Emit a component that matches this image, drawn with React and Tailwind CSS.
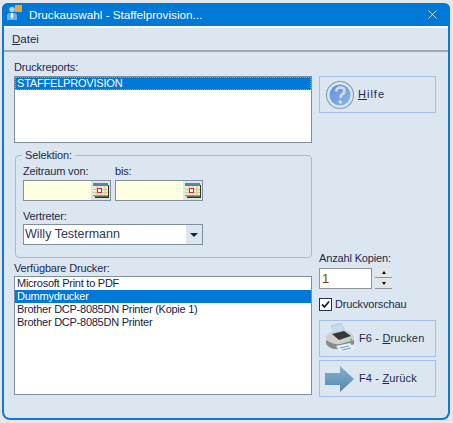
import React from 'react';
import { X } from 'lucide-react';

const AppIcon = () => (
    <svg width="16" height="16" viewBox="0 0 16 16" className="shrink-0">
        <rect x="8" y="0" width="7" height="7" fill="#f5a623" />
        <circle cx="5" cy="4.5" r="2.8" fill="#a9d3ef" />
        <path d="M0 15 V11 Q0 8 3 8 H7 Q10 8 10 11 V15 Z" fill="#6fb0de" />
        <path d="M4 8 H6 L6.3 12 L5 14 L3.7 12 Z" fill="#e8f3fb" />
    </svg>
);

const HelpIcon = () => (
    <svg width="30" height="30" viewBox="0 0 30 30" className="shrink-0">
        <defs>
            <linearGradient id="helpFill" x1="0" y1="0" x2="1" y2="1">
                <stop offset="0" stopColor="#5f8fdc" />
                <stop offset="1" stopColor="#8fb4e8" />
            </linearGradient>
        </defs>
        <circle cx="15" cy="15" r="14" fill="#8d9499" />
        <circle cx="15" cy="15" r="13" fill="#cdeaf8" />
        <circle cx="15" cy="15" r="10.5" fill="url(#helpFill)" />
        <path d="M11 11.5 Q11.5 7.5 15.5 7.5 Q19.5 7.5 19.5 11 Q19.5 13 17 14.5 Q15.5 15.5 15.5 18" fill="none" stroke="#d9dde2" strokeWidth="2.6" />
        <circle cx="15.3" cy="22" r="1.8" fill="#d9dde2" />
    </svg>
);

const CalendarIcon = () => (
    <svg width="16" height="15" viewBox="0 0 16 15" className="shrink-0">
        <rect x="2" y="2" width="14" height="13" fill="#333" />
        <rect x="0" y="0" width="15" height="3" fill="#4d8aa8" />
        <rect x="0" y="3" width="15" height="10" fill="#f0edc0" />
        <path d="M0 6.5 H15 M0 9.5 H15 M4 3 V13 M8 3 V13 M12 3 V13" stroke="#cfcd96" strokeWidth="1" />
        <rect x="4.5" y="5.5" width="4" height="4" fill="#f6f3d0" stroke="#d81b78" strokeWidth="1" />
        <rect x="0" y="12" width="15" height="1.5" fill="#a5a35a" />
    </svg>
);

const PrinterIcon = () => (
    <svg width="31" height="31" viewBox="0 0 31 31" className="shrink-0">
        <path d="M6 3 L16 0 L20 8 L10 11 Z" fill="#c4dcf2" stroke="#8fb2d4" strokeWidth="0.5" />
        <path d="M1 15 Q1 11 6 9 L20 7 Q28 9 29 14 L29 21 Q20 26 9 26 Q2 24 1 20 Z" fill="#cfd1ce" />
        <path d="M1 17 Q8 22 15 21 L29 17 L29 21 Q20 26 9 26 Q2 24 1 20 Z" fill="#8a8c8a" />
        <path d="M7 11 L19 8 L26 13 L14 17 Z" fill="#35373a" />
        <circle cx="26" cy="16.5" r="1" fill="#3bbf4a" />
        <path d="M11 23 L25 20 L30 26 L16 30 Z" fill="#e6eff9" />
        <path d="M15 25 L24 23 M17 27 L26 25" stroke="#6f9fd8" strokeWidth="1" />
    </svg>
);

const ArrowIcon = () => (
    <svg width="30" height="26" viewBox="0 0 30 26" className="shrink-0">
        <defs>
            <linearGradient id="arrowFill" x1="0" y1="0" x2="0" y2="1">
                <stop offset="0" stopColor="#86b0cf" />
                <stop offset="1" stopColor="#5388ad" />
            </linearGradient>
        </defs>
        <path d="M0 7 H15 V0 L29 13 L15 26 V19 H0 Z" fill="url(#arrowFill)" />
    </svg>
);

const ActionButton = ({ icon, children, gap }) => (
    <button className={`w-[117px] h-[37px] flex items-center pl-[5px] border border-[#a3c0e4] text-[11px] tracking-[0.15px] whitespace-nowrap text-[#1b2a4a] ${gap}`}>
        {icon}
        <span>{children}</span>
    </button>
);

const DateField = () => (
    <div className="w-[88px] h-[21px] flex border border-[#7f8f9c] bg-[#ffffe1]">
        <div className="flex-1" />
        <div className="w-[19px] bg-[#dce6f1] flex items-center justify-center">
            <CalendarIcon />
        </div>
    </div>
);

const printers = [
    'Microsoft Print to PDF',
    'Dummydrucker',
    'Brother DCP-8085DN Printer (Kopie 1)',
    'Brother DCP-8085DN Printer',
];

export default function App() {
    return (
        <div className="w-[453px] h-[423px] overflow-hidden bg-[#e4e6e8] pl-[2px] pr-[3px] pt-[3px] pb-[3px] font-['Liberation_Sans',sans-serif] text-[11px] tracking-[-0.15px] text-[#1b2a4a]">
            <div className="relative h-full flex flex-col rounded-t-[6px] rounded-b-[8px] border-x-2 border-b-2 border-[#0f78d4] bg-[#dce6f1]">
                <div className="h-[23px] -mx-[2px] rounded-t-[6px] bg-[#0078d7] flex items-center pl-[27px] pr-[10px] text-white text-[11.7px] tracking-normal">
                    <span className="flex-1">Druckauswahl - Staffelprovision...</span>
                    <X size={15} strokeWidth={1.2} />
                </div>
                <div className="absolute left-[3px] top-[2px]">
                    <AppIcon />
                </div>

                <div className="h-[26px] flex items-center pl-[8px] pt-[2px] border-t-2 border-t-white border-b-2 border-b-[#a2a7ab] text-[11.5px] tracking-normal">
                    <span><span className="underline">D</span>atei</span>
                </div>

                <div className="flex-1 flex pl-[10px] pt-[8px]">
                    <div className="w-[298px] flex flex-col">
                        <div className="leading-[14px] mb-[2px]">Druckreports:</div>
                        <div className="h-[67px] border border-[#7f8f9c] bg-white">
                            <div className="h-[13px] leading-[13px] bg-[#0078d7] text-white outline-1 outline-dotted -outline-offset-1 outline-[#f08a24] pl-[2px] tracking-[-0.2px]">
                                STAFFELPROVISION
                            </div>
                        </div>

                        <fieldset className="h-[109px] mt-[6px] ml-[1px] border border-[#a3b9d1] rounded-[4px] pl-[7px] pt-0">
                            <legend className="-ml-[1px] px-[3px] leading-[13px]">Selektion:</legend>
                            <div className="flex gap-[4px] mt-[2px] mb-[2px] leading-[14px]">
                                <span className="w-[88px]">Zeitraum von:</span>
                                <span>bis:</span>
                            </div>
                            <div className="flex gap-[4px]">
                                <DateField />
                                <DateField />
                            </div>
                            <div className="mt-[8px] mb-[1px] leading-[14px]">Vertreter:</div>
                            <div className="w-[180px] h-[21px] flex border border-[#7f8f9c] bg-white">
                                <div className="flex-1 pl-[1px] leading-[19px] text-[12.5px] tracking-normal text-[#2b3a55]">Willy Testermann</div>
                                <div className="w-[16px] bg-[#dce6f1] flex items-center justify-center">
                                    <div className="w-0 h-0 border-x-[4px] border-x-transparent border-t-[4px] border-t-[#16243f]" />
                                </div>
                            </div>
                        </fieldset>

                        <div className="mt-[3px] mb-[1px] leading-[14px]">Verfügbare Drucker:</div>
                        <div className="h-[119px] border border-[#7f8f9c] bg-white">
                            {printers.map((name) => (
                                <div
                                    key={name}
                                    className={`h-[13px] leading-[13px] pl-[2px] tracking-[-0.25px] ${name === 'Dummydrucker' ? 'bg-[#0078d7] text-white' : 'text-[#14233f]'}`}
                                >
                                    {name}
                                </div>
                            ))}
                        </div>
                    </div>

                    <div className="ml-[7px] w-[117px] flex flex-col pb-[21px]">
                        <div className="mt-[16px]">
                            <ActionButton icon={<HelpIcon />} gap="gap-[3px]">
                                <span className="tracking-[1px]"><span className="underline">H</span>ilfe</span>
                            </ActionButton>
                        </div>

                        <div className="mt-auto leading-[14px] mb-[3px]">Anzahl Kopien:</div>
                        <div className="flex items-center gap-[3px]">
                            <div className="w-[53px] h-[21px] border border-[#8f979e] bg-white pl-[2px] leading-[19px] text-[13px] text-[#7a3b1d]">1</div>
                            <div className="flex flex-col gap-[1px]">
                                <div className="w-[17px] h-[10px] bg-[#e4e6e8] border-b border-[#8f979e] flex items-center justify-center">
                                    <div className="w-0 h-0 border-x-[2.5px] border-x-transparent border-b-[3px] border-b-black" />
                                </div>
                                <div className="w-[17px] h-[10px] bg-[#e4e6e8] border-b border-[#8f979e] flex items-center justify-center">
                                    <div className="w-0 h-0 border-x-[2.5px] border-x-transparent border-t-[3px] border-t-black" />
                                </div>
                            </div>
                        </div>
                        <div className="flex items-center gap-[3px] mt-[9px] mb-[9px] leading-[13px]">
                            <div className="w-[13px] h-[13px] border border-[#1c3557] bg-white flex items-center justify-center">
                                <svg width="9" height="9" viewBox="0 0 9 9">
                                    <path d="M1 4.5 L3.5 7 L8 1.5" fill="none" stroke="#14233f" strokeWidth="1.8" />
                                </svg>
                            </div>
                            <span>Druckvorschau</span>
                        </div>
                        <ActionButton icon={<PrinterIcon />} gap="gap-[3px]">
                            F6 - <span className="underline">D</span>rucken
                        </ActionButton>
                        <div className="mt-[3px]">
                            <ActionButton icon={<ArrowIcon />} gap="gap-[4px]">
                                F4 - <span className="underline">Z</span>urück
                            </ActionButton>
                        </div>
                    </div>
                </div>
            </div>
        </div>
    );
}
